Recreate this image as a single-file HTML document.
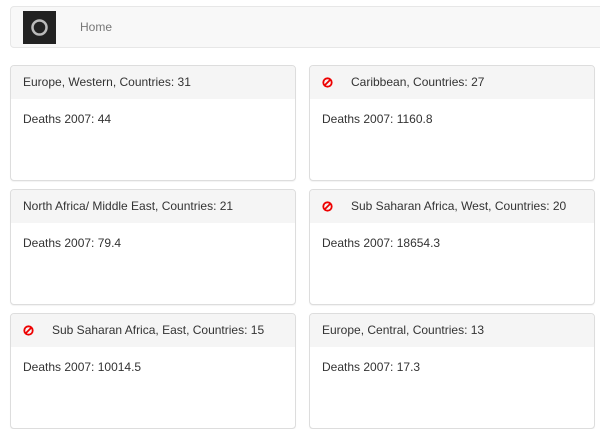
<!DOCTYPE html>
<html><head><style>
*{box-sizing:border-box;margin:0;padding:0}
body{width:600px;height:400px;overflow:hidden;background:#fff;font-family:"Liberation Sans",sans-serif;font-size:12px;color:#333;position:relative}
.nav{position:absolute;left:10px;top:6px;width:600px;height:42px;background:#f8f8f8;border:1px solid #e7e7e7;border-radius:4px}
.logo{position:absolute;left:12px;top:4px;width:33px;height:33px;background:#222}
.home{position:absolute;left:69px;top:13px;color:#777;font-size:12px}
.card{position:absolute;width:286px;height:116px;border:1px solid #ddd;border-radius:4px;box-shadow:0 1px 1px rgba(0,0,0,.05);overflow:hidden;background:#fff}
.hd{height:33px;background:#f5f5f5;padding:9px 12px;line-height:15px}
.bd{padding:13px 12px;line-height:15px}
.ic{display:inline-block;vertical-align:-2px;margin-right:18px}
</style></head><body>
<div class="nav"><div class="logo"><svg width="33" height="33"><circle cx="16.5" cy="16.5" r="7" fill="none" stroke="#bbb" stroke-width="2.5"/><circle cx="17.5" cy="16" r="4.5" fill="#222"/></svg></div><div class="home">Home</div></div>
<div class="card" style="left:10px;top:65px"><div class="hd">Europe, Western, Countries: 31</div><div class="bd">Deaths 2007: 44</div></div>
<div class="card" style="left:309px;top:65px"><div class="hd"><svg class="ic" width="11" height="11"><circle cx="5.5" cy="5.5" r="4.2" fill="none" stroke="#e00" stroke-width="1.8"/><line x1="3" y1="8" x2="8" y2="3" stroke="#e00" stroke-width="1.8"/></svg>Caribbean, Countries: 27</div><div class="bd">Deaths 2007: 1160.8</div></div>
<div class="card" style="left:10px;top:189px"><div class="hd">North Africa/ Middle East, Countries: 21</div><div class="bd">Deaths 2007: 79.4</div></div>
<div class="card" style="left:309px;top:189px"><div class="hd"><svg class="ic" width="11" height="11"><circle cx="5.5" cy="5.5" r="4.2" fill="none" stroke="#e00" stroke-width="1.8"/><line x1="3" y1="8" x2="8" y2="3" stroke="#e00" stroke-width="1.8"/></svg>Sub Saharan Africa, West, Countries: 20</div><div class="bd">Deaths 2007: 18654.3</div></div>
<div class="card" style="left:10px;top:313px"><div class="hd"><svg class="ic" width="11" height="11"><circle cx="5.5" cy="5.5" r="4.2" fill="none" stroke="#e00" stroke-width="1.8"/><line x1="3" y1="8" x2="8" y2="3" stroke="#e00" stroke-width="1.8"/></svg>Sub Saharan Africa, East, Countries: 15</div><div class="bd">Deaths 2007: 10014.5</div></div>
<div class="card" style="left:309px;top:313px"><div class="hd">Europe, Central, Countries: 13</div><div class="bd">Deaths 2007: 17.3</div></div>
</body></html>
